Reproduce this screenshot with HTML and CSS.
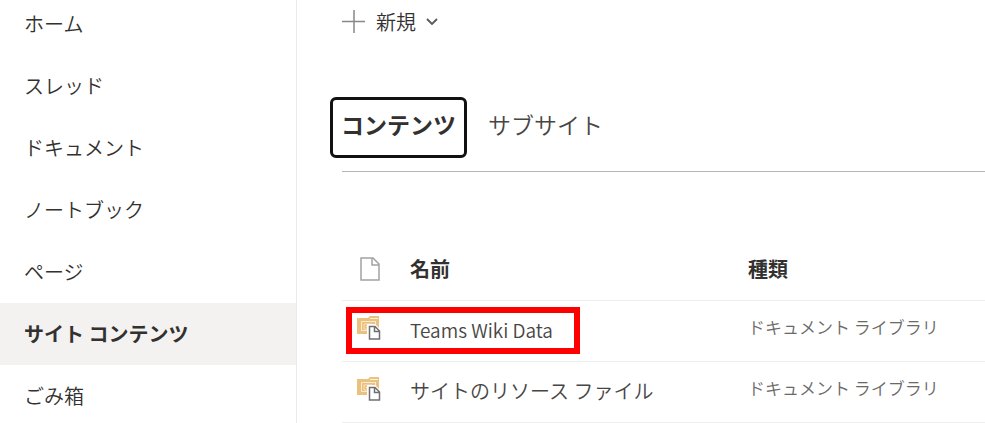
FILE: index.html
```html
<!DOCTYPE html>
<html lang="ja">
<head>
<meta charset="UTF-8">
<meta name="viewport" content="width=device-width, initial-scale=1.0">
<title>サイト コンテンツ</title>
<link rel="stylesheet" href="styles.css">
</head>
<body>
<svg class="sprite" aria-hidden="true">
    <symbol id="library" viewBox="0 0 24 24">
        <path d="M0 2h11l2-2h9v18H0z" fill="#ebc180"/>
        <path d="M13 2.500h8" stroke="#fff3dd"/>
        <path d="M4.500 15V5.500H19M4.500 14.500H11M18.500 5v4" fill="none" stroke="#fbe9cb"/>
        <path d="M7 8h8v5H7z" fill="none" stroke="#f8dfb5"/>
        <path d="M9 10.500h1M12 10.500h1" stroke="#fff3dd"/>
        <path d="M10 8h8l6 6v10H10z" fill="#fff"/>
        <path d="M12.500 10.500h5.500l4.500 4.500v8h-10zM17.500 10.500v5h5" fill="#fff" stroke="#707070" stroke-width="1.500"/>
    </symbol>
</svg>
<div class="page">
    <nav class="sidebar">
        <a href="#">ホーム</a>
        <a href="#">スレッド</a>
        <a href="#">ドキュメント</a>
        <a href="#">ノートブック</a>
        <a href="#">ページ</a>
        <a href="#" class="active" aria-current="page">サイト コンテンツ</a>
        <a href="#">ごみ箱</a>
    </nav>

    <main class="content">
        <button type="button" class="new-button">
            <svg width="24" height="24" viewBox="0 0 24 24" aria-hidden="true"><path d="M12 0v23M0 11.5h23" stroke="#8a8886" stroke-width="1.5"/></svg>
            <span>新規</span>
            <svg width="12" height="8" viewBox="0 0 12 8" aria-hidden="true"><path d="M1 1l5 5 5-5" fill="none" stroke="#555b52" stroke-width="1.8"/></svg>
        </button>

        <div class="tabs" role="tablist">
            <button type="button" class="tab selected" role="tab" aria-selected="true">コンテンツ</button>
            <button type="button" class="tab" role="tab" aria-selected="false">サブサイト</button>
        </div>

        <table class="items">
            <thead>
                <tr>
                    <th class="icon-col">
                        <svg width="20" height="24" viewBox="0 0 20 24" role="img" aria-label="アイコン"><path d="M1 1h12l6 6v16H1zM12 1v7h7" fill="none" stroke="#a3a3a3" stroke-width="1.5"/></svg>
                    </th>
                    <th class="name-col">名前</th>
                    <th>種類</th>
                </tr>
            </thead>
            <tbody>
                <tr>
                    <td class="icon-col marked"><svg width="24" height="24" aria-hidden="true"><use href="#library"/></svg></td>
                    <td><a href="#" class="latin">Teams Wiki Data</a></td>
                    <td class="type">ドキュメント ライブラリ</td>
                </tr>
                <tr>
                    <td class="icon-col"><svg width="24" height="24" aria-hidden="true"><use href="#library"/></svg></td>
                    <td><a href="#">サイトのリソース ファイル</a></td>
                    <td class="type">ドキュメント ライブラリ</td>
                </tr>
            </tbody>
        </table>
    </main>
</div>
</body>
</html>
```
FILE: styles.css
```css
* {
    box-sizing: border-box;
}
body {
    margin: 0;
    font-family: "Noto Sans CJK JP", sans-serif;
    font-size: 20px;
    font-weight: 350;
    line-height: 28px;
    color: #323130;
    background-color: #fff;
}
a {
    color: inherit;
    text-decoration: none;
}
button {
    padding: 0;
    border: none;
    background: none;
    font: inherit;
    color: inherit;
    cursor: pointer;
}
svg {
    display: block;
}
.sprite {
    display: none;
}
.page {
    display: flex;
    height: 100vh;
    overflow: hidden;
}

/* left navigation */
.sidebar {
    flex: none;
    width: 297px;
    margin-top: -7px;
    border-right: 1px solid #eaeaea;
}
.sidebar a {
    display: block;
    padding: 17px 24px;
}
.sidebar a.active {
    font-weight: 700;
    background-color: #f3f2f1;
}

.content {
    flex: 1;
    min-width: 0;
    padding: 8px 0 0 45px;
}
.new-button {
    display: flex;
    align-items: center;
    gap: 10px;
}

/* tabs */
.tabs {
    display: flex;
    gap: 10px;
    margin-top: 61px;
    padding-bottom: 13px;
    border-bottom: 1px solid #b5b5b5;
}
.tab {
    padding: 10px 8px 17px;
    border: 3px solid transparent;
    border-radius: 6px;
    font-size: 23px;
    color: #484644;
}
.tab.selected {
    margin-left: -12px;
    border-color: #111;
    font-weight: 700;
    color: #323130;
}

/* list of site contents */
.items {
    width: 100%;
    margin-top: 68px;
    border-collapse: collapse;
    table-layout: fixed;
}
th, td {
    padding: 15px 0 17px;
    border-bottom: 1px solid #eee;
    text-align: left;
}
td {
    color: #484644;
}
.icon-col {
    width: 68px;
    padding-left: 18px;
}
td.icon-col {
    padding: 15px 0 21px 15px;
}
.name-col {
    width: 338px;
}
.latin {
    font-size: 19px;
}
td.type {
    padding: 14px 0 22px;
    font-size: 17px;
    line-height: 24px;
    color: #6b6967;
}

/* red frame over the icon and the name */
.marked {
    position: relative;
}
.marked::after {
    content: "";
    position: absolute;
    left: 4px;
    top: 6px;
    width: 222px;
    height: 35px;
    border: 6px solid #f00;
}
```
